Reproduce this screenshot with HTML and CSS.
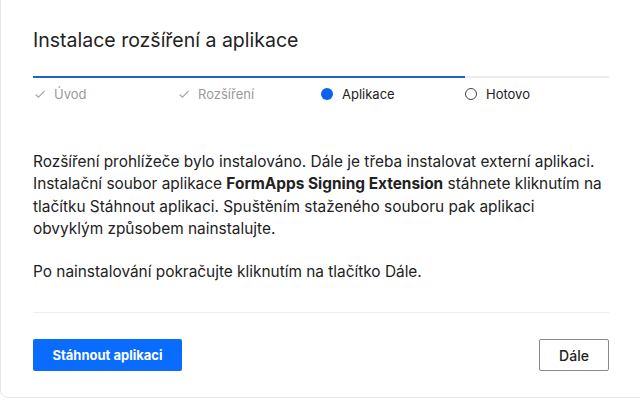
FILE: index.html
```html
<!DOCTYPE html>
<html lang="cs">
<head>
<meta charset="utf-8">
<link rel="stylesheet" href="styles.css">
</head>
<body>
<div class="modal">
  <h1 class="title">Instalace rozšíření a aplikace</h1>
  <div class="progress"><div class="progress-fill" style="width:75%"></div></div>
  <ol class="steps">
    <li class="step done"><svg class="check" viewBox="0 0 12 12" width="12" height="12"><path d="M1.5 6.5 L4.5 9.2 L10.5 3" fill="none" stroke="#a8a8a8" stroke-width="1.1"/></svg>Úvod</li>
    <li class="step done"><svg class="check" viewBox="0 0 12 12" width="12" height="12"><path d="M1.5 6.5 L4.5 9.2 L10.5 3" fill="none" stroke="#a8a8a8" stroke-width="1.1"/></svg>Rozšíření</li>
    <li class="step active"><span class="dot"></span>Aplikace</li>
    <li class="step todo"><span class="ring"></span>Hotovo</li>
  </ol>
  <div class="content">
    <p>Rozšíření prohlížeče bylo instalováno. Dále je třeba instalovat externí aplikaci. Instalační soubor aplikace <strong>FormApps Signing Extension</strong> stáhnete kliknutím na tlačítku Stáhnout aplikaci. Spuštěním staženého souboru pak aplikaci <span class="nowrap">obvyklým způsobem</span> nainstalujte.</p>
    <p>Po nainstalování pokračujte kliknutím na tlačítko Dále.</p>
  </div>
  <div class="footer">
    <button class="btn btn-primary">Stáhnout aplikaci</button>
    <button class="btn btn-secondary">Dále</button>
  </div>
</div>
</body>
</html>
```

FILE: styles.css
```css
* { box-sizing: border-box; }
html, body { margin: 0; padding: 0; background: #fff; }
body {
  width: 640px;
  height: 400px;
  overflow: hidden;
  font-family: Inter, "Noto Sans", sans-serif;
  color: #222;
}
.modal {
  margin: -10px -10px 0 0;
  height: 408px;
  padding: 37px 41px 0 32px;
  border: 1px solid #e6e6e6;
  border-radius: 8px;
  background: #fff;
}
.title {
  margin: 0;
  font-size: 19.5px;
  font-weight: 400;
  line-height: 24px;
  color: #222;
}
.progress {
  margin-top: 24px;
  height: 2px;
  width: 576px;
  background: #ececec;
}
.progress-fill {
  height: 2px;
  background: #1f64c8;
}
.steps {
  list-style: none;
  margin: 0;
  padding: 0;
  width: 576px;
  display: grid;
  grid-template-columns: repeat(4, 1fr);
  height: 32px;
  align-items: center;
}
.step {
  display: flex;
  align-items: center;
  font-size: 13px;
  line-height: 16px;
}
.step.done { color: #9a9a9a; }
.step.active, .step.todo { color: #222; }
.check { margin: 0 8px 0 1px; }
.dot {
  width: 12px; height: 12px; border-radius: 50%;
  background: #0a63ee;
  margin-right: 9px;
}
.ring {
  width: 12px; height: 12px; border-radius: 50%;
  border: 1px solid #444;
  margin-right: 9px;
}
.content {
  margin-top: 41px;
  width: 576px;
  padding-bottom: 29px;
  border-bottom: 1px solid #ededed;
}
.content p {
  margin: 0 0 20px;
  font-size: 15.4px;
  line-height: 22.4px;
  color: #222;
}
.content p:last-child { margin-bottom: 0; }
.nowrap { white-space: nowrap; }
.footer {
  width: 576px;
  margin-top: 26px;
  display: flex;
  justify-content: space-between;
}
.btn {
  height: 32px;
  font-family: Inter, "Noto Sans", sans-serif;
  font-size: 13px;
  border-radius: 2px;
  cursor: pointer;
}
.btn-primary {
  background: #0a6cff;
  color: #fff;
  border: none;
  font-weight: 700;
  width: 149px;
}
.btn-secondary {
  background: #fff;
  color: #222;
  border: 1px solid #8a8a8a;
  font-weight: 500;
  font-size: 14px;
  width: 70px;
}
```
